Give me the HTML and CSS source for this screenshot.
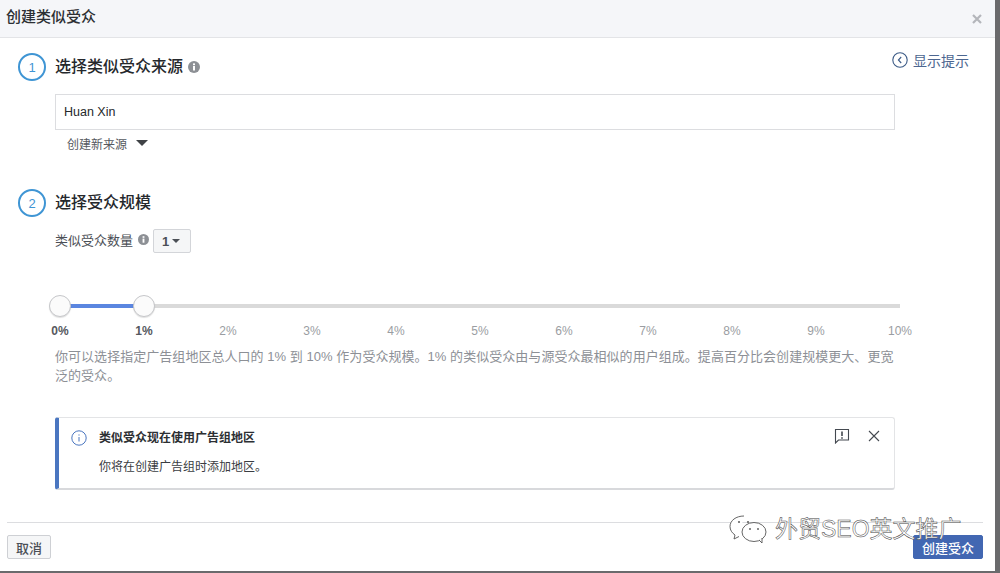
FILE: index.html
```html
<!DOCTYPE html>
<html lang="zh">
<head>
<meta charset="utf-8">
<title>创建类似受众</title>
<link rel="stylesheet" href="styles.css">
</head>
<body>
<div class="dialog">
  <header class="head">
    <span class="head-title">创建类似受众</span>
    <svg class="head-close" viewBox="0 0 10 10" width="10" height="10"><path d="M1 1L9 9M9 1L1 9" stroke="#b4b6bb" stroke-width="2.2"/></svg>
  </header>
  <main class="body">
    <a class="tips">
      <svg viewBox="0 0 16 16" width="16" height="16"><circle cx="8" cy="8" r="7.2" fill="none" stroke="#3b5a86" stroke-width="1.1"/><path d="M9.2 5L6.4 8L9.2 11" fill="none" stroke="#3b5a86" stroke-width="1.1"/></svg>
      <span>显示提示</span>
    </a>
    <section class="step step-one">
      <div class="step-head">
        <span class="num">1</span>
        <h2>选择类似受众来源</h2>
        <svg class="info" viewBox="0 0 12 12" width="12" height="12"><circle cx="6" cy="6" r="6" fill="#8d9095"/><rect x="5" y="5" width="2" height="4.5" fill="#fff"/><rect x="5" y="2.4" width="2" height="1.8" fill="#fff"/></svg>
      </div>
      <div class="field">Huan Xin</div>
      <div class="create">创建新来源<i class="caret-big"></i></div>
    </section>
    <section class="step step-two">
      <div class="step-head">
        <span class="num">2</span>
        <h2>选择受众规模</h2>
      </div>
      <div class="count">
        <span class="count-label">类似受众数量</span>
        <svg class="info info-small" viewBox="0 0 12 12" width="11" height="11"><circle cx="6" cy="6" r="6" fill="#8d9095"/><rect x="5" y="5" width="2" height="4.5" fill="#fff"/><rect x="5" y="2.4" width="2" height="1.8" fill="#fff"/></svg>
        <span class="select">1<i class="caret-small"></i></span>
      </div>
      <div class="slider">
        <div class="track"><div class="fill"></div></div>
        <span class="thumb thumb-a"></span>
        <span class="thumb thumb-b"></span>
      </div>
      <div class="scale">
        <span class="on">0%</span><span class="on">1%</span><span>2%</span><span>3%</span><span>4%</span><span>5%</span><span>6%</span><span>7%</span><span>8%</span><span>9%</span><span>10%</span>
      </div>
      <p class="desc">你可以选择指定广告组地区总人口的 1% 到 10% 作为受众规模。1% 的类似受众由与源受众最相似的用户组成。提高百分比会创建规模更大、更宽泛的受众。</p>
      <div class="notice">
        <svg class="notice-icon" viewBox="0 0 16 16" width="16" height="16"><circle cx="8" cy="8" r="7.2" fill="none" stroke="#4a76c0" stroke-width="1"/><path d="M8 7V11.5M8 4.4V5.6" stroke="#4a76c0" stroke-width="1"/></svg>
        <div class="notice-text">
          <strong>类似受众现在使用广告组地区</strong>
          <span>你将在创建广告组时添加地区。</span>
        </div>
        <svg class="notice-flag" viewBox="0 0 16 16" width="16" height="16"><path d="M1.5 1.5H14.5V12H4.5L1.5 15Z" fill="none" stroke="#444950" stroke-width="1.1"/><path d="M8 3.5V8M8 9.2V10.8" stroke="#444950" stroke-width="1.6"/></svg>
        <svg class="notice-x" viewBox="0 0 12 12" width="12" height="12"><path d="M1 1L11 11M11 1L1 11" stroke="#444950" stroke-width="1.1"/></svg>
      </div>
    </section>
  </main>
  <footer class="foot">
    <button class="btn">取消</button>
    <button class="btn primary">创建受众</button>
  </footer>
  <div class="mark">
    <svg viewBox="0 0 40 28" width="40" height="28"><path d="M15 1C7 1 1 5.500 1 11.500C1 15 3 18 6 20L5 24L10 21.500" fill="#fff" stroke="#555" stroke-width="0.9"/><ellipse cx="25" cy="17" rx="12" ry="9.500" fill="#fff" stroke="#555" stroke-width="0.9"/><path d="M30 25L33 28L33 23" fill="#fff" stroke="#555" stroke-width="0.9"/><circle cx="10" cy="7" r="1.100" fill="#666"/><circle cx="19" cy="7" r="1.100" fill="#666"/><circle cx="21" cy="14" r="1" fill="#666"/><circle cx="29" cy="14" r="1" fill="#666"/></svg>
    <span>外贸SEO英文推广</span>
  </div>
</div>
</body>
</html>
```
FILE: styles.css
```css
* { box-sizing: border-box; }
html, body { margin: 0; height: 100%; }
body {
  width: 1000px;
  height: 573px;
  overflow: hidden;
  background: #6a6a6c;
  font-family: "Liberation Sans", "Noto Sans CJK SC", sans-serif;
  color: #4b4f56;
}
.dialog {
  position: relative;
  width: 995px;
  height: 571px;
  background: #fff;
  display: flex;
  flex-direction: column;
}
.head {
  height: 38px;
  flex: none;
  padding: 0 18px 0 6px;
  display: flex;
  align-items: center;
  justify-content: space-between;
  background: #f5f6f9;
  border-bottom: 1px solid #e3e4e7;
}
.head-title { font-size: 15px; font-weight: 500; color: #2c2f33; margin-top: -7px; }
.head-close { margin-top: 1px; margin-right: -5px; }
.body { position: relative; flex: 1; padding: 0 0 0 18px; }
.tips {
  position: absolute;
  top: 12px;
  left: 892px;
  display: flex;
  align-items: center;
  gap: 5px;
  font-size: 14px;
  color: #4c6690;
  white-space: nowrap;
}
.step-one { padding-top: 15px; }
.step-two { padding-top: 35px; }
.step-head { display: flex; align-items: center; height: 28px; }
.num {
  width: 28px;
  height: 28px;
  flex: none;
  border: 2px solid #3f95d4;
  border-radius: 50%;
  display: flex;
  align-items: center;
  justify-content: center;
  font-size: 13px;
  color: #3f95d4;
}
h2 { margin: 0 0 0 9px; font-size: 16px; font-weight: 500; line-height: 28px; color: #25282c; }
.info { margin-left: 5px; flex: none; }
.field {
  margin: 13px 0 0 37px;
  width: 840px;
  height: 36px;
  padding: 0 8px;
  display: flex;
  align-items: center;
  border: 1px solid #dcdde0;
  font-size: 12.500px;
  color: #25282c;
}
.create {
  margin: 4px 0 0 49px;
  height: 20px;
  padding-bottom: 2px;
  display: flex;
  align-items: center;
  font-size: 12px;
  color: #55585e;
}
.caret-big {
  margin-left: 9px;
  width: 0;
  height: 0;
  border: 6px solid transparent;
  border-top: 6px solid #3f4246;
  border-bottom: 0;
}
.count {
  margin: 12px 0 0 37px;
  height: 24px;
  display: flex;
  align-items: center;
  font-size: 13px;
  color: #4b4f56;
}
.count-label { margin-top: -4px; }
.info-small { margin: -4px 0 0 5px; }
.select {
  margin-left: 4px;
  width: 38px;
  height: 24px;
  display: flex;
  align-items: center;
  padding-left: 8px;
  gap: 3px;
  background: #f5f6f7;
  border: 1px solid #d3d5d9;
  border-radius: 2px;
  font-size: 13px;
  font-weight: 700;
  color: #4b4f56;
}
.caret-small {
  width: 0;
  height: 0;
  border: 4.500px solid transparent;
  border-top: 4.500px solid #4b4f56;
  border-bottom: 0;
}
.slider { position: relative; margin: 42px 0 0 42px; width: 840px; height: 22px; display: flex; align-items: center; }
.track { width: 100%; height: 4px; background: #dadada; }
.fill { width: 84px; height: 100%; background: #5b86e0; }
.thumb {
  position: absolute;
  top: 0;
  width: 22px;
  height: 22px;
  margin-left: -11px;
  border-radius: 50%;
  background: #fbfbfb;
  border: 1px solid #c6c7ca;
  box-shadow: 0 1px 1px rgba(0,0,0,.12);
}
.thumb-a { left: 0; }
.thumb-b { left: 84px; }
.scale {
  margin: 6px 0 0 42px;
  width: 840px;
  height: 16px;
  display: flex;
  justify-content: space-between;
  font-size: 12px;
  line-height: 16px;
  color: #9a9da2;
}
.scale span { width: 0; display: flex; justify-content: center; white-space: nowrap; }
.scale .on { font-weight: 700; color: #55585e; }
.desc {
  margin: 8px 0 0 37px;
  width: 842px;
  font-size: 13px;
  line-height: 19px;
  letter-spacing: 0.04px;
  color: #8d9096;
}
.notice {
  margin: 32px 0 0 37px;
  width: 840px;
  height: 73px;
  display: flex;
  align-items: flex-start;
  padding: 12px 13px 0 12px;
  border: 1px solid #e3e4e6;
  border-left: 4px solid #4a76c0;
  border-bottom: 2px solid #d8d9dc;
  border-radius: 3px;
  background: #fff;
}
.notice-icon { flex: none; margin-right: 12px; }
.notice-text { flex: 1; display: flex; flex-direction: column; gap: 13px; font-size: 12px; line-height: 16px; color: #3a3d42; }
.notice-text strong { font-weight: 700; color: #2c2f33; }
.notice-flag { flex: none; margin: -2px 18px 0 0; }
.notice-x { flex: none; margin: 0 1px 0 0; }
.foot {
  margin: 0 12px 0 7px;
  height: 49px;
  flex: none;
  display: flex;
  align-items: flex-start;
  justify-content: space-between;
  padding-top: 12px;
  border-top: 1px solid #dcdde0;
}
.btn {
  height: 24px;
  width: 44px;
  padding: 0;
  font: 500 13px "Liberation Sans", "Noto Sans CJK SC", sans-serif;
  color: #4b4f56;
  background: #f5f6f7;
  border: 1px solid #ced0d4;
  border-radius: 2px;
}
.primary { width: 70px; background: #4267b2; border-color: #4267b2; color: #fff; }
.mark {
  position: absolute;
  left: 729px;
  top: 515px;
  display: flex;
  align-items: center;
  gap: 6px;
  font-size: 23px;
  line-height: 28px;
  color: #fff;
  -webkit-text-stroke: 0.5px #444;
  white-space: nowrap;
}
```
